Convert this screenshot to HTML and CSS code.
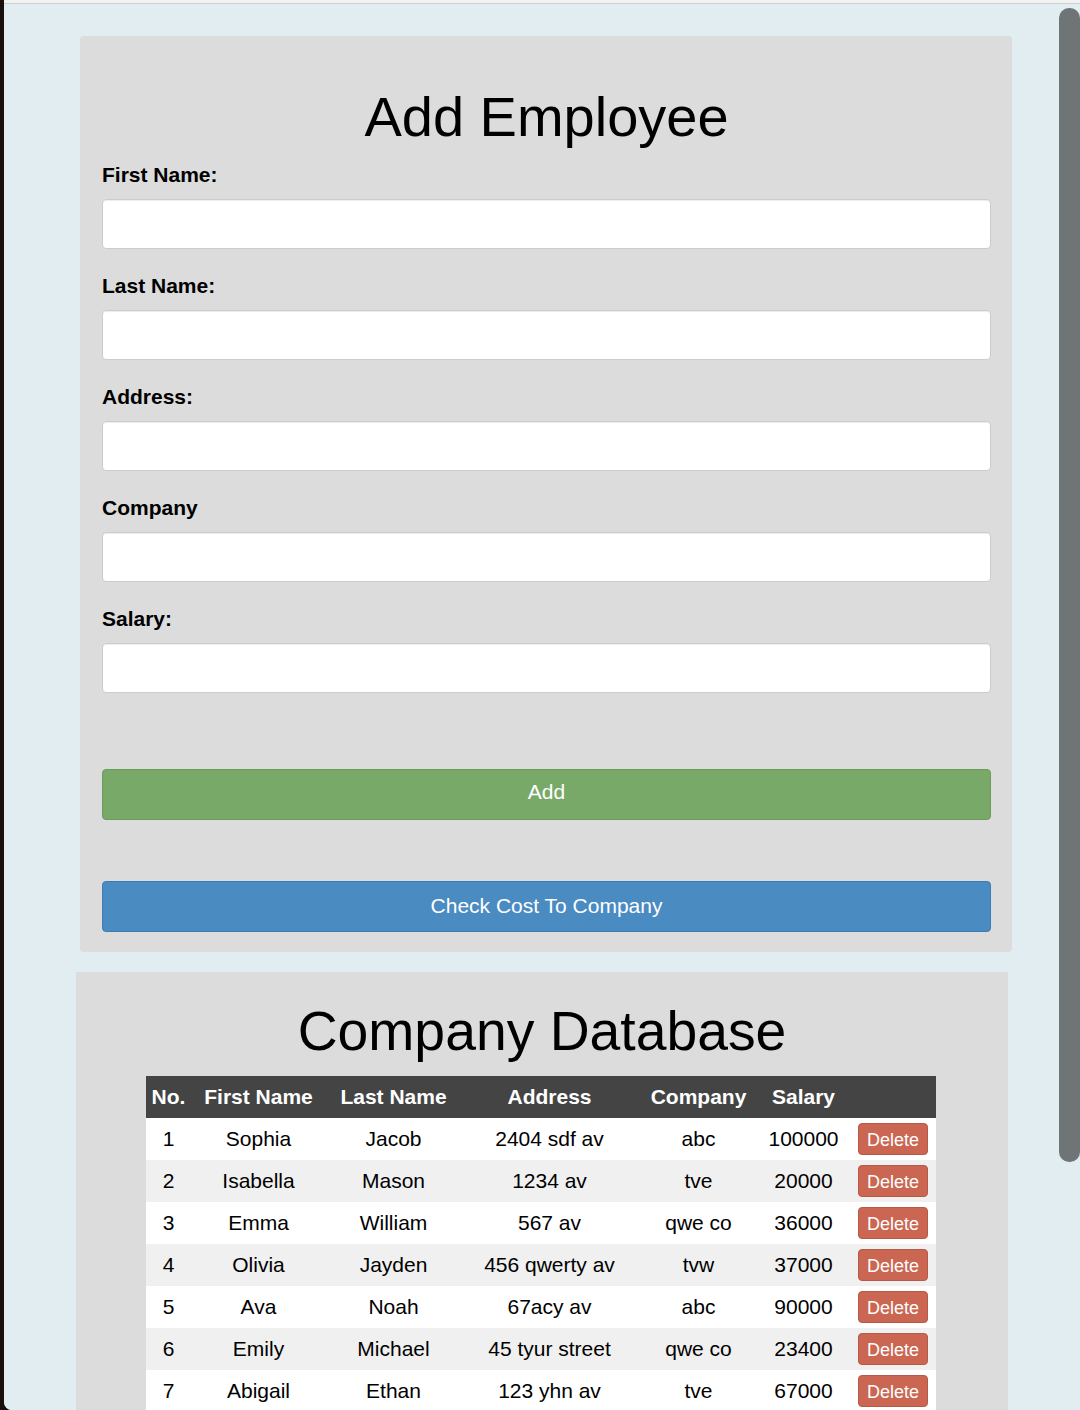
FILE: index.html
```html
<!DOCTYPE html>
<html lang="en">
<head>
<meta charset="utf-8">
<title>Employees</title>
<link rel="stylesheet" href="styles.css">
</head>
<body>
<div class="frame">
  <div class="topbar"></div>
  <div class="viewport">
    <section class="panel form-panel">
      <h1 class="title">Add Employee</h1>
      <form class="form">
        <label class="label">First Name:</label>
        <input class="input" type="text">
        <label class="label">Last Name:</label>
        <input class="input" type="text">
        <label class="label">Address:</label>
        <input class="input" type="text">
        <label class="label">Company</label>
        <input class="input" type="text">
        <label class="label">Salary:</label>
        <input class="input" type="text">
        <button type="button" class="btn btn-add">Add</button>
        <button type="button" class="btn btn-check">Check Cost To Company</button>
      </form>
    </section>
    <section class="panel db-panel">
      <h1 class="title title-db">Company Database</h1>
      <table class="table">
        <colgroup>
          <col class="c1"><col class="c2"><col class="c3"><col class="c4"><col class="c5"><col class="c6"><col class="c7">
        </colgroup>
        <thead>
          <tr><th>No.</th><th>First Name</th><th>Last Name</th><th>Address</th><th>Company</th><th>Salary</th><th></th></tr>
        </thead>
        <tbody>
          <tr><td>1</td><td>Sophia</td><td>Jacob</td><td>2404 sdf av</td><td>abc</td><td>100000</td><td><button type="button" class="del">Delete</button></td></tr>
          <tr><td>2</td><td>Isabella</td><td>Mason</td><td>1234 av</td><td>tve</td><td>20000</td><td><button type="button" class="del">Delete</button></td></tr>
          <tr><td>3</td><td>Emma</td><td>William</td><td>567 av</td><td>qwe co</td><td>36000</td><td><button type="button" class="del">Delete</button></td></tr>
          <tr><td>4</td><td>Olivia</td><td>Jayden</td><td>456 qwerty av</td><td>tvw</td><td>37000</td><td><button type="button" class="del">Delete</button></td></tr>
          <tr><td>5</td><td>Ava</td><td>Noah</td><td>67acy av</td><td>abc</td><td>90000</td><td><button type="button" class="del">Delete</button></td></tr>
          <tr><td>6</td><td>Emily</td><td>Michael</td><td>45 tyur street</td><td>qwe co</td><td>23400</td><td><button type="button" class="del">Delete</button></td></tr>
          <tr><td>7</td><td>Abigail</td><td>Ethan</td><td>123 yhn av</td><td>tve</td><td>67000</td><td><button type="button" class="del">Delete</button></td></tr>
        </tbody>
      </table>
    </section>
    <div class="scrollbar"></div>
  </div>
</div>
</body>
</html>
```

FILE: styles.css
```css
html, body {
  margin: 0;
  padding: 0;
  height: 1410px;
  overflow: hidden;
}
body {
  background: #1a0f0b;
  font-family: "Liberation Sans", Arial, Helvetica, sans-serif;
  color: #000;
}
.frame {
  margin-left: 4px;
  height: 1410px;
  display: flex;
  flex-direction: column;
  background: #e2edf2;
  border-bottom-left-radius: 8px;
  overflow: hidden;
}
.topbar {
  height: 3px;
  background: #f2f2f2;
  border-bottom: 1px solid #cfcfcf;
  flex: none;
}
.viewport {
  position: relative;
  flex: 1;
  background: #e2edf2;
  padding-top: 32px;
}
.panel {
  width: 932px;
  box-sizing: border-box;
  background: #dcdcdc;
}
.form-panel {
  margin-left: 76px;
  border-radius: 4px;
  padding: 49px 21px 20px 22px;
}
.db-panel {
  margin-left: 72px;
  margin-top: 20px;
  padding-top: 27px;
  height: 460px;
}
.title {
  margin: 0;
  font-size: 56px;
  line-height: 64px;
  font-weight: 400;
  text-align: center;
}
.title-db {
  font-size: 55.3px;
  margin-bottom: 13px;
}
.form {
  display: flex;
  flex-direction: column;
  margin-top: 14px;
}
.label {
  display: block;
  font-size: 21px;
  line-height: 24px;
  font-weight: 700;
  margin-bottom: 12px;
}
.input {
  display: block;
  height: 50px;
  box-sizing: border-box;
  width: 100%;
  margin: 0 0 25px 0;
  border: 1px solid #cccccc;
  border-radius: 4px;
  background: #fff;
  box-shadow: inset 0 1px 1px rgba(0,0,0,0.075);
}
.btn {
  display: block;
  width: 100%;
  height: 51px;
  box-sizing: border-box;
  border-radius: 4px;
  color: #fff;
  font-family: "Liberation Sans", Arial, Helvetica, sans-serif;
  font-size: 21px;
  padding: 0;
}
.btn-add {
  margin-top: 51px;
  padding-bottom: 5px;
  background: #79a969;
  border: 1px solid #6a9c5b;
}
.btn-check {
  margin-top: 61px;
  padding-bottom: 2px;
  background: #4a8bc2;
  border: 1px solid #3d7cb3;
}
.table {
  margin: 0 0 0 70px;
  width: 790px;
  border-collapse: collapse;
  table-layout: fixed;
  font-size: 21px;
}
.c1 { width: 45px; }
.c2 { width: 135px; }
.c3 { width: 135px; }
.c4 { width: 177px; }
.c5 { width: 121px; }
.c6 { width: 89px; }
.c7 { width: 88px; }
.table th {
  background: #444444;
  color: #fff;
  font-weight: 700;
  height: 42px;
  padding: 0;
  text-align: center;
  white-space: nowrap;
}
.table td {
  height: 42px;
  padding: 0;
  text-align: center;
  vertical-align: middle;
  white-space: nowrap;
}
.table tbody tr:nth-child(odd) td { background: #ffffff; }
.table tbody tr:nth-child(even) td { background: #f0f0f0; }
.del {
  width: 70px;
  height: 32px;
  padding: 2px 0 0 0;
  margin-left: 2px;
  background: #ca6651;
  border: 1px solid #b65a46;
  border-radius: 4px;
  color: #fff;
  font-family: "Liberation Sans", Arial, Helvetica, sans-serif;
  font-size: 18px;
  line-height: 28px;
  vertical-align: middle;
}
.scrollbar {
  position: absolute;
  top: 4px;
  right: 0;
  width: 21px;
  height: 1154px;
  border-radius: 10px;
  background: #6f7476;
}
```
